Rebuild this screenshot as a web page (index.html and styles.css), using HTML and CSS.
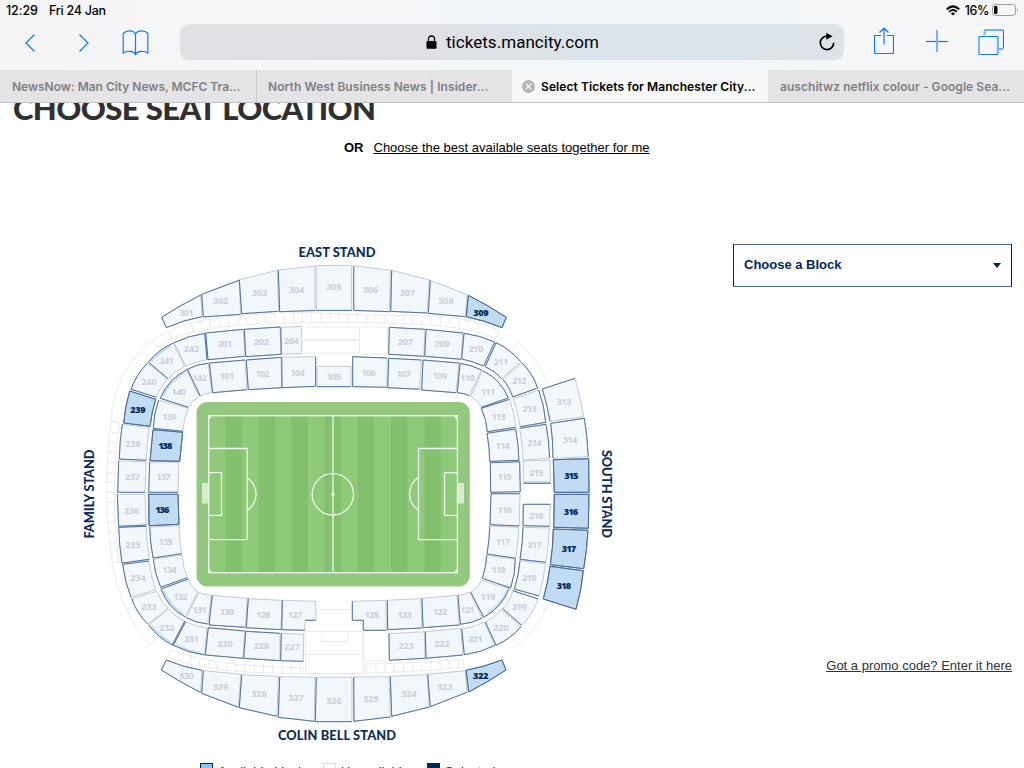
FILE: index.html
```html
<!DOCTYPE html>
<html lang="en">
<head>
    <meta charset="UTF-8">
    <meta name="viewport" content="width=device-width, initial-scale=1.0">
    <title>Select Tickets for Manchester City</title>
    <link rel="stylesheet" href="styles.css">
</head>
<body>
    <div class="browser">
        <div class="status-bar">
            <span class="time">12:29</span>
            <span class="date">Fri 24 Jan</span>
            <svg class="wifi" width="14" height="11" viewBox="0 0 14 11">
                <path d="M0.8 4.2 Q7 -1.4 13.2 4.2" fill="none" stroke="#000" stroke-width="2"/>
                <path d="M3.2 6.8 Q7 3.4 10.8 6.8" fill="none" stroke="#000" stroke-width="1.9"/>
                <path d="M4.9 8.4 Q7 6.7 9.1 8.4 L7 10.6 Z"/>
            </svg>
            <span class="percent">16%</span>
            <svg class="battery" width="27" height="12" viewBox="0 0 27 12">
                <rect x="0.5" y="0.5" width="23" height="11" rx="3" fill="none" stroke="#9b9b9d"/>
                <rect x="2" y="2" width="3.5" height="8" rx="1"/>
                <path d="M25 4 Q27 6 25 8 Z" fill="#9b9b9d"/>
            </svg>
        </div>

        <div class="toolbar">
            <svg class="tool back" width="12" height="20" viewBox="0 0 12 20"><path d="M10.5 1.5 L2 10 L10.5 18.5"/></svg>
            <svg class="tool forward" width="12" height="20" viewBox="0 0 12 20"><path d="M1.5 1.5 L10 10 L1.5 18.5"/></svg>
            <svg class="tool book" width="26" height="26" viewBox="0 0 26 26">
                <path d="M13 24.5 C11 20.5 4.5 20.5 0.7 23 V3.5 C4 0 11 0 13 4 C15 0 22 0 25.3 3.5 V23 C21.5 20.5 15 20.5 13 24.5 Z M13 4 V24"/>
            </svg>
            <div class="address">
                <svg class="lock" width="11" height="14" viewBox="0 0 11 14">
                    <path d="M2.5 6 V4 Q2.5 1 5.5 1 Q8.5 1 8.5 4 V6" fill="none" stroke="#000" stroke-width="1.3"/>
                    <rect x="0.5" y="6" width="10" height="7.7" rx="1"/>
                </svg>
                <span class="url">tickets.mancity.com</span>
                <svg class="reload" width="18" height="20" viewBox="0 0 18 20">
                    <path d="M9.5 4.2 A6.7 6.7 0 1 0 15.7 10.8" fill="none" stroke="#000" stroke-width="1.7"/>
                    <path d="M8.3 0.8 L14.5 4.2 L8.3 7.8 Z"/>
                </svg>
            </div>
            <svg class="tool share" width="20" height="28" viewBox="0 0 20 28">
                <path d="M7 8.5 H0.5 V26.5 H19.5 V8.5 H13 M10 17.5 V1.5 M5.5 5.5 L10 1.2 L14.5 5.5"/>
            </svg>
            <svg class="tool plus" width="22" height="22" viewBox="0 0 22 22"><path d="M0 11.5 H22"/><path class="soft" d="M11 0 V22"/></svg>
            <svg class="tool pages" width="26" height="26" viewBox="0 0 26 26">
                <path d="M1 7.5 H19.5 V25.5 H0.5 M25.5 1 V19.5"/>
                <path class="soft" d="M1 7 V26 M20 8 V25 M6.5 6 V2 M6 1 H25 M21 20 H25"/>
            </svg>
        </div>

        <div class="tabs">
            <div class="tab"><span>NewsNow: Man City News, MCFC Tra...</span></div>
            <div class="tab north"><span>North West Business News | Insider...</span></div>
            <div class="tab active">
                <svg class="close" width="13" height="13" viewBox="0 0 13 13">
                    <circle cx="6.5" cy="6.5" r="6.5" fill="#b4b4b5"/>
                    <path d="M3.7 3.7 L9.3 9.3 M9.3 3.7 L3.7 9.3" stroke="#fff" stroke-width="1.2"/>
                </svg>
                <span>Select Tickets for Manchester City...</span>
            </div>
            <div class="tab google"><span>auschitwz netflix colour - Google Sea...</span></div>
        </div>
    </div>

    <div class="page">
        <h1>CHOOSE SEAT LOCATION</h1>
        <p class="best">
            <strong>OR</strong>
            <a href="#">Choose the best available seats together for me</a>
        </p>

        <div class="content">
            <div class="map">
                <svg id="stadium" width="540" height="510" viewBox="80 240 540 510">
                    <!-- closed rows and boxes -->
                    <g class="closed">
                        <path d="M169 331 Q190 320 240 315.5 T334 313.5 T440 316 Q475 320 499 330 L496.5 338 Q470 328 430 325 T334 322.5 T240 325 Q195 329 171.5 338 Z"/>
                        <path class="ticks" d="M192 327.5 Q215 321.5 260 319.5 T334 318 T440 320.8 T484 328"/>
                        <path d="M152 341 L157 348 M152 341 C130 357 112 388 111 421 L119 422"/>
                        <path d="M152 341 Q160 334.5 168 331.5 L172 338.5 Q163 342.5 156 348"/>
                        <path d="M111 421 Q101 492 112.5 565 Q120 610 150 645.5 L156 640"/>
                        <path d="M119.5 422 Q109 492 119 564"/>
                        <path class="ticks side" d="M115.5 422 Q105 492 116 566"/>
                        <path d="M513 349 L518 342 Q540 362 549 386 M549 602 Q540 625 518 645.5 L513 639"/>
                        <path d="M171 649 Q190 659 240 664.5 Q270 667 304 668 L303.5 673.5 Q255 674.5 205 667.5 Q185 664 168.5 657 Z"/>
                        <path class="ticks" d="M190 661 Q230 669 304 669"/>
                        <path d="M364.5 664 Q420 663.5 463 659 L464 667 Q430 671.5 364.5 673 Z"/>
                        <path class="ticks" d="M366 668.5 Q420 668 462 663"/>
                        <path d="M303 327 H359.5 V339 H303.5 M303.5 340.5 H359.5 V353 H303 M361 327 H387.5 V354 H361"/>
                        <path d="M317 610 V619 H306 M317 609.5 H352 M306 631.5 H363 V673.5 H305.5 V631.5 M306 654.5 H363 M321.5 634.5 V641.5 H347.5 V634.5 M364 632 V661 H388 M306 674 H363"/>
                    </g>

                    <!-- pitch -->
                    <rect x="196.5" y="402" width="273.3" height="184.5" rx="11" fill="#93c97f"/>
                    <g id="stripes"></g>
                    <g class="lines">
                        <rect x="208.7" y="415.7" width="248.7" height="157"/>
                        <path d="M333 415.7 V572.7 M209 448.5 H247.3 V539.7 H209 M209 472.7 H221.5 V515.3 H209"/>
                        <path d="M457.3 448.5 H418.5 V539.7 H457.3 M457.3 472.7 H444.5 V515.3 H457.3"/>
                        <path d="M247.5 478 Q256 484 256 494 Q256 504 247.5 510.5 M418.3 477 Q409.5 484 409.5 494 Q409.5 504 418.3 510"/>
                        <circle cx="332.8" cy="494.3" r="20.7"/>
                        <path d="M209 418.5 L211.5 416 M457 418.5 L454.5 416 M209 570 L211.5 572.5 M457 570 L454.5 572.5"/>
                    </g>
                    <circle cx="332.8" cy="494.3" r="1.8" fill="#f0f7ec"/>
                    <rect class="goal" x="202" y="483" width="6" height="20.5"/>
                    <rect class="goal" x="458" y="483" width="6" height="20.5"/>

                    <g id="blocks"></g>
                    <g id="shades"></g>
                    <g id="edges"></g>

                    <g class="stand">
                        <text x="298.5" y="257" textLength="77">EAST STAND</text>
                        <text x="278" y="740" textLength="118">COLIN BELL STAND</text>
                        <text transform="translate(94 538.5) rotate(-90)" textLength="89">FAMILY STAND</text>
                        <text transform="translate(602 450) rotate(90)" textLength="88">SOUTH STAND</text>
                    </g>
                </svg>
                <div class="legend">
                    <span class="item"><i class="swatch available"></i>Available block</span>
                    <span class="item"><i class="swatch unavailable"></i>Unavailable</span>
                    <span class="item"><i class="swatch selected"></i>Selected</span>
                </div>
            </div>

            <div class="sidebar">
                <div class="select">Choose a Block <i class="arrow"></i></div>
                <a class="promo" href="#">Got a promo code? Enter it here</a>
            </div>
        </div>
    </div>

    <script src="script.js"></script>
</body>
</html>
```

FILE: styles.css
```css
* {
    box-sizing: border-box;
    margin: 0;
    padding: 0;
}

body {
    width: 1024px;
    height: 768px;
    overflow: hidden;
    background-color: white;
    font-family: "Liberation Sans", Arial, sans-serif;
    color: #000;
}

span, a, strong, h1 {
    white-space: nowrap;
}

/* Browser bars */
.browser {
    position: relative;
    height: 103px;
    background: linear-gradient(90deg, #f5f5f6 0%, #f5f6f8 35%, #f1f6f9 55%, #f3f6f8 75%, #f6f6f7 100%);
    border-bottom: 1px solid #c3c3c5;
    font-family: Inter, sans-serif;
}

.status-bar {
    display: flex;
    align-items: center;
    height: 20px;
    padding: 0 5px 0 6px;
    font-size: 12.5px;
    font-weight: 500;
}

.time {
    width: 43px;
    letter-spacing: -0.1px;
}

.date {
    flex: 1;
    letter-spacing: -0.25px;
}

.percent {
    margin: 0 3px 0 5px;
    letter-spacing: -0.4px;
}

.toolbar {
    display: flex;
    align-items: center;
    height: 50px;
    padding: 0 20px 6px 24px;
}

.tool {
    flex: none;
    fill: none;
    stroke: #0a7aff;
    stroke-width: 1.2;
}

.tool .soft {
    stroke: #72b2ff;
    stroke-width: 2;
}

.back {
    margin-top: 2px;
}

.forward {
    margin: 2px 0 0 42px;
}

.book {
    margin: 1px 0 0 32px;
    width: 27px;
}

.address {
    display: flex;
    align-items: center;
    width: 664px;
    height: 36px;
    margin-left: 31px;
    padding: 0 8px 0 246px;
    border-radius: 9px;
    background: linear-gradient(90deg, #e1e1e5 0%, #dfe0e5 35%, #dae4ea 60%, #dbe4ea 85%, #dee3e8 100%);
}

.url {
    flex: 1;
    margin-left: 9px;
    font-family: Roboto, sans-serif;
    font-size: 17px;
    letter-spacing: 0.04px;
}

.share {
    margin: -2px 0 0 30px;
}

.plus {
    margin: -2px 0 0 32px;
}

.pages {
    margin-left: 30px;
}

.tabs {
    display: flex;
    height: 32px;
}

.tab {
    display: flex;
    align-items: center;
    width: 256px;
    padding-left: 12px;
    background-color: #e4e4e7;
    color: #808082;
    font-size: 12px;
    font-weight: 600;
}

.tab:first-child {
    width: 257px;
    border-right: 1px solid #cbcbce;
    letter-spacing: -0.02px;
}

.north {
    width: 255px;
    padding-left: 11px;
    letter-spacing: 0.07px;
}

.google {
    letter-spacing: 0.05px;
}

.tab.active {
    padding-left: 10px;
    background-color: #f8f8f8;
    color: #000;
    letter-spacing: 0.09px;
}

.close {
    margin-right: 6px;
}

/* Page */
.page {
    height: 665px;
    overflow: hidden;
}

h1 {
    height: 32px;
    margin: -11px 0 0 13px;
    font-family: Lato, sans-serif;
    font-size: 31px;
    font-weight: 900;
    line-height: 32px;
    letter-spacing: -0.6px;
    color: #303032;
}

.best {
    display: flex;
    height: 20px;
    margin-top: 14px;
    padding-left: 344px;
    font-size: 13px;
    line-height: 20px;
}

.best a {
    margin-left: 10px;
    color: #000;
}

.content {
    display: flex;
    margin-top: 82px;
}

.map {
    width: 733px;
    padding-left: 80px;
}

#stadium {
    display: block;
}

.legend {
    display: flex;
    height: 30px;
    margin-top: 11px;
    padding-left: 120px;
    font-size: 13px;
    line-height: 22px;
    color: #303032;
}

.item {
    display: flex;
    width: 123px;
}

.item + .item {
    width: 104px;
}

.swatch {
    width: 13px;
    height: 13px;
    margin: 2px 5px 0 0;
    border: 1px solid #00285e;
}

.available {
    background-color: #8fc1ea;
}

.unavailable {
    border-color: #dedee2;
}

.selected {
    background-color: #00285e;
}

.sidebar {
    display: flex;
    flex-direction: column;
    width: 279px;
    padding-top: 4px;
}

.select {
    display: flex;
    align-items: center;
    justify-content: space-between;
    height: 43px;
    padding: 0 10px 2px;
    border: 1px solid #00285e;
    border-top-color: #4c6690;
    border-bottom-color: #4c6690;
    font-size: 13px;
    font-weight: bold;
    color: #00285e;
}

.arrow {
    margin-top: 2px;
    border: 4.5px solid transparent;
    border-top: 5px solid #00285e;
    border-bottom: 0;
}

.promo {
    margin-top: 371px;
    align-self: flex-end;
    font-size: 13px;
    color: #303032;
}

/* Stadium */
.block {
    fill: #f2f7fc;
    stroke: #b4bdcb;
    stroke-width: 0.8;
}

.block.free {
    fill: #c1dbf3;
    stroke: #3c5f8b;
}

.edge {
    fill: none;
    stroke: #456a96;
    stroke-width: 0.9;
}

.shade {
    fill: none;
    stroke: #c3ddf4;
    stroke-width: 2;
}

.number {
    font-family: "Open Sans", sans-serif;
    font-size: 9.2px;
    font-weight: 700;
    text-anchor: middle;
    fill: #cbd0dc;
}

.number.free {
    font-weight: 800;
    fill: #002a5c;
}

.stand {
    font-family: Lato, sans-serif;
    font-size: 12.8px;
    font-weight: 900;
    fill: #0b2d5b;
}

.closed {
    fill: none;
    stroke: #e9e9ec;
    stroke-width: 0.9;
}

.closed .ticks {
    stroke-width: 8.5;
    stroke-dasharray: 1 8.2;
}

.closed .side {
    stroke-width: 8;
    stroke-dasharray: 1 9;
}

.lines {
    fill: none;
    stroke: #f0f7ec;
    stroke-width: 1.3;
}

.goal {
    fill: #d9ecd2;
}
```

FILE: script.js
```javascript
// number, label x, label y, corners (clockwise), dark edges, bend per edge, free
const blocks = [
    ['301', 186.5, 312.7, '161.7,317.3 200.7,295 202,316.7 166.3,327.7', '023', [1, 0, -2, 0]],
    ['302', 220.3, 301, '201.7,294.3 239,280.3 240.7,314.3 203.3,317', '023'],
    ['303', 259.5, 293, '239.3,279.7 277.3,270.3 278.7,311.3 241.7,313.7', '23'],
    ['304', 296.5, 289.3, '278.3,270 315,266 315,310.5 279.7,311.7', '23'],
    ['305', 334, 287, '316.3,265.5 351.7,265.4 351.7,310.4 316.3,310.4', '2'],
    ['306', 370.5, 289.3, '353.7,265.8 390.3,270.3 389.7,311.7 353.7,310.4', '23'],
    ['307', 407.3, 293, '391.7,270.3 429.3,280 427,313 390.7,311.4', '23'],
    ['308', 446, 301, '430.3,280.4 467.3,294.7 465.3,316.7 428.3,313.4', '23'],
    ['309', 481, 312.9, '468.3,295.3 506.3,317.3 502,327.7 466.3,316.7', '0123', [1, 0, -1.5, 0], 1],
    ['201', 225, 344, '205.7,333 243.3,329.3 245,356.3 208,359.7', '023'],
    ['202', 261.3, 342, '244.3,329.3 280,327 281,354.3 245.7,356.7', '023'],
    ['204', 291.3, 341, '280.7,327.4 301.7,326.4 301.7,353.7 281.3,354', '3'],
    ['207', 405.3, 342, '389.3,327.3 425,329.3 423.7,356.3 388.7,354.3', '023'],
    ['209', 442, 344, '426,329.3 463,333 461,359.3 424.7,356.3', '023'],
    ['210', 476, 349, '464,333.3 494.7,342 483.7,366 461.7,359', '0123', [2, 0, -1, 0]],
    ['211', 501, 361.3, '496,342.7 520.7,361.7 501.7,378.7 485.3,366.7', '023', [3, 0, -2, 0]],
    ['212', 519.3, 381, '521.7,362.7 537.7,388 512.7,397 502.7,379.3', '012', [3, 0, -2, 0]],
    ['213', 529.7, 409, '538.7,390 545.7,422.3 520.3,426.7 513.3,398.7', '01', [2, 0, -1, 0]],
    ['214', 534.3, 442.3, '546,424.3 549.7,458 523,460.3 519.7,428.3', '03', [1, 0, -1, 0]],
    ['215', 536.3, 472.3, '550,460 550.7,483.3 523.3,483.3 523.3,461', '1'],
    ['216', 536.3, 515.7, '550.3,504.3 549.7,526.3 523,525.7 523.3,504.3', '123'],
    ['217', 534.7, 545, '549.3,528 545.7,562.3 520,559.3 523,527.3', '12', [1, 0, -1, 0]],
    ['218', 529.5, 577.7, '545.3,563.7 539,596 514.3,589 520,560.7', '12', [1.5, 0, -1.5, 0]],
    ['219', 519.5, 606.3, '538,599 521.7,625.3 502.7,608.7 513,590.7', '13', [3, 0, -2, 0]],
    ['220', 501, 627.5, '521,626.7 496,645.3 485.3,622 501.3,609.3', '01', [3, 0, -2, 0]],
    ['221', 475.5, 639, '495,645.3 464.3,654.7 461.7,629 484,622', '01', [2.5, 0, -2, 0]],
    ['222', 442, 643.7, '425.3,631.7 461,628.3 463,655 426,658.3', '23'],
    ['223', 406, 645.7, '389,633.7 424.3,631.7 425,658.3 389.3,660.3', '23'],
    ['227', 292, 647, '281.3,633.3 303.7,634.3 303.3,661.3 280.7,660.7', '23'],
    ['228', 261.3, 645.7, '245.7,631.3 280,633.3 280,660.7 243.7,658.3', '023'],
    ['230', 225, 643.7, '208.3,627.7 244.7,631 243,658.3 205.3,655', '023'],
    ['231', 191.5, 639, '204.7,655 173.3,645.3 185.7,621.7 207,627.7', '01', [2.5, 0, -2, 0]],
    ['232', 166.7, 627.5, '172.3,645 148.7,625 168.7,609 184.7,621', '03', [3, 0, -2, 0]],
    ['233', 149, 606.3, '148,624.3 131.7,598.7 156.7,591.3 168,608', '0', [3, 0, -2, 0]],
    ['234', 138, 577.7, '131,597.3 122.7,564.3 149,561 155.7,589.7', '01', [2, 0, -1.5, 0]],
    ['235', 133, 545, '122,563 118.7,527.3 146.3,526.3 149.3,559.3', '013', [1, 0, -1, 0]],
    ['236', 131.7, 510.5, '118.7,526.3 117.3,494.3 145,494.3 146.3,525', '03'],
    ['237', 132.3, 477, '117.7,492.3 118.7,460.7 146,461.7 145,492.3', '03'],
    ['238', 133, 444, '119.3,459 122.3,424.3 149.3,427.7 146.3,460.3', '03', [1, 0, -1, 0]],
    ['239', 138, 409.7, '123.7,423 129.7,391 155.7,399.3 150,426.3', '0123', [1.5, 0, -1, 0], 1],
    ['240', 149, 381.7, '131,389.3 147.7,363 167.3,379.3 156.3,397.3', '03', [3, 0, -2, 0]],
    ['241', 166.7, 361, '148.3,362 173.3,343 184.7,366.3 168,378.7', '03', [3, 0, -2, 0]],
    ['242', 191.3, 349, '174,342.7 204.7,333.3 207,359.7 186,366.3', '01', [2, 0, -1.5, 0]],
    ['101', 227, 376, '209.3,363 245,360 247,389.7 212.7,392.7', '023'],
    ['102', 262.7, 374, '246.3,360 281,357.3 281.7,387.7 248.3,389.7', '023'],
    ['104', 297.7, 372.7, '281.7,357.3 315.7,356.7 315.7,386.3 282,387.7', '123'],
    ['105', 334, 377, '317,366.3 351,366.3 351,386.7 317,386.7', '2'],
    ['106', 368.7, 372.7, '352.7,356.7 387,358 387,387.3 352.7,386.7', '023'],
    ['107', 403.7, 374, '388.7,358.3 421.3,360 419.7,389.3 387.7,387.7', '023'],
    ['109', 440, 376, '423,360 459,363 456,392.7 421.7,390', '023'],
    ['110', 467.5, 378, '460,363.3 481.7,370 469.3,395.7 457.3,392.7', '023', [1.5, 0, -1, 0]],
    ['111', 488, 391.3, '482.7,370.7 508.3,398 481.3,407.3 470.7,396.3', '01', [6, 0, -2, 0]],
    ['113', 498.7, 416.7, '509.7,399.3 515.7,427.3 487.3,431.7 481.3,408.3', '123', [1.5, 0, -2, 0]],
    ['114', 502.7, 446, '515.7,429 519,460.3 489.7,461.3 487,433.3', '0123', [1, 0, -1, 0]],
    ['115', 504.7, 477, '519.7,461.7 520.3,491.7 490.7,492.3 490.3,462.7', '0123'],
    ['116', 504.7, 509.5, '520,493.7 519.3,526 490,524.7 491,493.7', '123'],
    ['117', 503, 541.3, '518.7,527.3 515.7,558.3 487,554 489.7,526', '12', [1, 0, -1, 0]],
    ['118', 498.7, 570, '515.3,559.3 510.7,588 482.3,578.3 486.7,555.3', '012', [2, 0, -1.5, 0]],
    ['119', 488, 597, '509,588.7 483.7,617.3 470.7,592.3 481.7,580.3', '01', [6, 0, -2, 0]],
    ['121', 467.7, 610, '482.3,618 460.3,624.3 458,595 470,592', '01', [2, 0, -1, 0]],
    ['122', 440, 611.7, '422,598.3 457,595.3 459.3,625 423,627.7', '23'],
    ['123', 404.5, 614.3, '387.3,600.3 420.7,598.7 422,628 387.7,629.7', '23'],
    ['125', 372, 615, '352.3,601.3 386,600.3 386.3,630.3 363.3,630.3 363.3,620.3 352.3,620.3', '2345'],
    ['127', 295, 615, '282.3,600.3 315.7,601.3 315.7,620.3 305,620.3 304.7,630.3 281.7,629.7', '245'],
    ['128', 263.3, 614.3, '248.3,598.7 282,600.3 281,629.7 246.3,627.7', '23'],
    ['130', 227, 611.7, '212.3,595.3 247.3,598.3 245.3,627.3 209,625', '23'],
    ['131', 199.7, 610, '207.7,624 186.3,617.7 198.7,592.3 211.3,595.3', '0', [2, 0, -1, 0]],
    ['132', 180.3, 597, '185.3,617 161,589 188.3,579 197.7,592', '01', [6, 0, -2, 0]],
    ['134', 169.3, 569.7, '160.7,587.3 153.3,559.3 182,555 187.3,577.7', '03', [2, 0, -1.5, 0]],
    ['135', 165.7, 541.3, '153,558 149.7,527 179,525.7 181.7,553.7', '03', [1, 0, -1, 0]],
    ['136', 162.3, 509.7, '149,525.7 148.7,494.3 178,494.3 179,524.3', '0123', 0, 1],
    ['137', 163.7, 477, '148.7,492.3 149.7,462 179,462 178,492.3', '03'],
    ['138', 165.3, 446, '150,460.7 153,429.7 182.7,432.3 179.7,461.3', '0123', 0, 1],
    ['139', 169.3, 416.7, '153.3,428.3 158.7,400 188.3,408.3 183,431.3', '03', [2, 0, -2, 0]],
    ['140', 178.7, 391.3, '160.3,398.3 186.7,369.7 199.3,396.7 188.3,407.3', '03', [6, 0, -2, 0]],
    ['142', 199.5, 378, '187.3,369.3 208.3,363.3 211.7,392.7 200.3,396', '03', [2, 0, -1, 0]],
    ['313', 564, 401.3, '575,378.3 583.7,416.7 550,421.3 542.3,389', '23', [1, 0, -1, 0]],
    ['314', 570, 440, '584.3,418.3 588.3,456.7 553,458.3 550.7,423.3', '023', [1, 0, -1, 0]],
    ['315', 571.3, 475.7, '588.7,458.7 589,492.3 554.3,492.3 553.3,459.7', '0123', 0, 1],
    ['316', 571, 511.3, '589,494.3 588.3,528.3 553.7,527.3 554.3,494.3', '0123', 0, 1],
    ['317', 569, 548.7, '588,530.3 583.7,568.7 550.3,564.7 553.3,529', '0123', [1, 0, -1, 0], 1],
    ['318', 564, 585.7, '583.3,570.7 576,609.3 543.3,599 550,566.3', '0123', [1.5, 0, -1, 0], 1],
    ['322', 480.7, 675.8, '466,670.3 502,660 506,670 468.7,692', '0123', [-1.5, 0, 1, 0], 1],
    ['323', 445, 687, '427.7,674.3 465.3,670.7 467,692.3 430.3,706.7', '23'],
    ['324', 409, 693.3, '390.3,676.3 427,674.7 429.3,707 391.7,716.3', '23'],
    ['325', 371, 698.3, '353.7,677 389,676.7 390.3,717 354,721.3', '23'],
    ['326', 334, 700.3, '316.3,677.3 352,677.3 352,721.7 315.3,721.7', '23'],
    ['327', 296, 698, '279.7,676.7 315,677.3 314.3,721.3 278.3,717.3', '23'],
    ['328', 259, 693.3, '241.7,674.7 278.3,676.3 277,716.3 239.3,707.7', '23'],
    ['329', 220.5, 686.7, '203.3,670.7 241,674.3 238.3,707.3 201.7,693.3', '23'],
    ['330', 186.3, 676, '166.3,660 202,670.3 200.3,692.3 161.3,670', '023', [-2, 0, 1, 0]]
];

// light blue strips along the rounded corners
const shades = [
    'M163 396 Q171 380 184 373', 'M163 591 Q171 606 183 614', 'M507 591 Q500 605 488 613',
    'M524 482 H550', 'M176 645 Q190 652 203 653.5', 'M152 626 Q160 636 170 642', 'M151 361.5 Q159 352 171 346'
];

const svgNS = 'http://www.w3.org/2000/svg';

function add(parentId, name, attrs, text) {
    const el = document.createElementNS(svgNS, name);
    for (const key in attrs) el.setAttribute(key, attrs[key]);
    if (text) el.textContent = text;
    document.getElementById(parentId).appendChild(el);
}

// Curve from a to b, pushed outwards by bend
function curve(a, b, bend) {
    const dx = b[0] - a[0];
    const dy = b[1] - a[1];
    const len = Math.hypot(dx, dy);
    const cx = (a[0] + b[0]) / 2 + dy / len * bend;
    const cy = (a[1] + b[1]) / 2 - dx / len * bend;
    return 'Q' + cx + ' ' + cy + ' ' + b[0] + ' ' + b[1];
}

function drawBlocks() {
    for (const [num, x, y, corners, dark, bends, free] of blocks) {
        const pts = corners.split(' ').map(p => p.split(',').map(Number));
        const edges = pts.map((p, i) => curve(p, pts[(i + 1) % pts.length], (bends && bends[i] || 0) * 1.2));
        const state = free ? ' free' : '';
        add('blocks', 'path', { class: 'block' + state, d: 'M' + pts[0] + edges.join('') + 'Z' });
        for (const i of dark) {
            add('edges', 'path', { class: 'edge', d: 'M' + pts[i] + edges[i] });
        }
        add('edges', 'text', { class: 'number' + state, x: x, y: y + 3.3, textLength: num.includes('1') ? 14.3 : 15.3 }, num);
    }
    for (const d of shades) add('shades', 'path', { class: 'shade', d: d });
}

function drawStripes() {
    for (let i = 0; i < 15; i++) {
        add('stripes', 'rect', {
            x: 208.7 + i * 16.58, y: 415.7, width: 16.6, height: 157,
            fill: i % 2 ? '#83c06d' : '#8fc97a'
        });
    }
}

drawStripes();
drawBlocks();
```
